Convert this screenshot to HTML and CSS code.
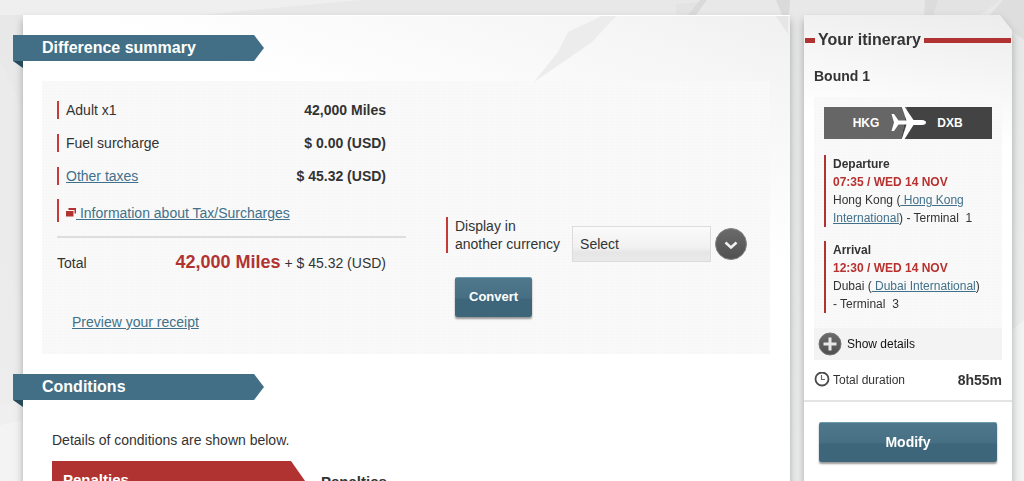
FILE: index.html
```html
<!DOCTYPE html>
<html lang="en">
<head>
<meta charset="utf-8">
<title>Difference summary</title>
<meta name="viewport" content="width=device-width, initial-scale=1">
<link rel="stylesheet" href="styles.css">
</head>
<body>
<svg class="backdrop" viewBox="0 0 1024 481" preserveAspectRatio="none" aria-hidden="true">
  <path d="M0 0H360L200 15H0Z" fill="#efefef"/>
  <path d="M676 4L700 2L690 15H676Z" fill="#e3e3e3"/>
  <path d="M700 0H707L696 15H688Z" fill="#dadada"/>
  <path d="M776 0H790L789 15H782Z" fill="#dadada"/>
  <path d="M925 0H938L934 15H924Z" fill="#dcdcdc"/>
  <path d="M938 0H1000L980 15H934Z" fill="#e3e3e3"/>
  <path d="M1003 0H1024V40L990 15Z" fill="#dedede"/>
  <path d="M0 60L23 110V300L0 250Z" fill="#ebebeb"/>
  <path d="M0 405L23 400V420L0 425Z" fill="#efefef"/>
  <path d="M0 425L23 420V481H0Z" fill="#f3f3f3"/>
  <path d="M1012 330L1024 320V481H1012Z" fill="#f2f2f2"/>
</svg>
<div class="page">
  <main class="card">
    <svg class="shards" viewBox="0 0 340 66" aria-hidden="true">
      <path d="M152 0H166L142 26L116 44L84 66L108 36L118 16Z" fill="#ececec"/>
      <path d="M326 0H338V18Z" fill="#e6e6e6"/>
    </svg>
    <section class="summary">
      <h2 class="ribbon"><span class="ribbon-label">Difference summary</span></h2>
      <div class="panel dotted">
        <div class="charges">
          <dl class="lines">
            <div class="line"><dt>Adult x1</dt><dd>42,000 Miles</dd></div>
            <div class="line"><dt>Fuel surcharge</dt><dd>$ 0.00 (USD)</dd></div>
            <div class="line"><dt><a href="#taxes">Other taxes</a></dt><dd>$ 45.32 (USD)</dd></div>
          </dl>
          <p class="info">
            <svg class="popup-icon" viewBox="0 0 10 9" aria-hidden="true"><path d="M2.500 0H10V5.500H8.500V2H2.500Z" fill="#b13331"/><path d="M0 3H7.500V8.500H0Z" fill="#b13331"/></svg><a href="#info">&nbsp;Information about Tax/Surcharges</a>
          </p>
          <div class="total">
            <span>Total</span>
            <span class="amount"><strong>42,000 Miles</strong> + $ 45.32 (USD)</span>
          </div>
          <a class="receipt" href="#receipt">Preview your receipt</a>
        </div>
        <form class="currency">
          <div class="currency-row">
            <label for="currency">Display in<br>another currency</label>
            <div class="picker">
              <select id="currency"><option>Select</option></select>
              <svg class="picker-icon" viewBox="0 0 32 32" aria-hidden="true">
                <defs><linearGradient id="disc" x2="0" y2="1"><stop offset="0" stop-color="#6b6b6b"/><stop offset="1" stop-color="#505050"/></linearGradient></defs>
                <circle cx="16" cy="16" r="15.500" fill="url(#disc)" stroke="#858585"/>
                <path d="M10.500 14.500L16 19.500L21.500 14.500" fill="none" stroke="#f2f2f2" stroke-width="2.500"/>
              </svg>
            </div>
          </div>
          <button class="button convert" type="button">Convert</button>
        </form>
      </div>
    </section>
    <section class="conditions">
      <h2 class="ribbon"><span class="ribbon-label">Conditions</span></h2>
      <p class="note">Details of conditions are shown below.</p>
      <div class="penalties">
        <h3 class="flag">Penalties</h3>
        <h3 class="column-title">Penalties</h3>
      </div>
    </section>
  </main>
  <aside class="itinerary">
    <h2 class="title">Your itinerary</h2>
    <div class="bound">
      <h3>Bound 1</h3>
      <div class="flight dotted">
        <div class="route">
          <span>HKG</span><span>DXB</span>
          <svg class="plane" viewBox="0 0 36 34" aria-hidden="true"><path d="M10.500 0H13L22.500 14H31Q35 14.500 35 16.500Q35 18.500 31 19H22.500L13 34H10.500L15.500 18.500H7.500L3 25H.500L3 16.500L.500 8H3L7.500 14.500H15.500Z" fill="#fff"/></svg>
        </div>
        <div class="stop">
          <h4>Departure</h4>
          <strong>07:35 / WED 14 NOV</strong>
          <p>Hong Kong (<a href="#hkg"> Hong Kong International</a>) - Terminal&nbsp; 1</p>
        </div>
        <div class="stop">
          <h4>Arrival</h4>
          <strong>12:30 / WED 14 NOV</strong>
          <p>Dubai (<a href="#dxb"> Dubai International</a>) <span class="terminal">- Terminal&nbsp; 3</span></p>
        </div>
      </div>
      <button class="details dotted" type="button">
        <svg viewBox="0 0 24 24" aria-hidden="true"><circle cx="12" cy="12" r="11" fill="url(#disc)" stroke="#777"/><path d="M12 5.500V18.500M5.500 12H18.500" stroke="#e8e8e8" stroke-width="3"/></svg>
        Show details
      </button>
      <div class="duration">
        <svg viewBox="0 0 16 16" aria-hidden="true"><circle cx="8" cy="7" r="6.500" fill="#fff" stroke="#4a4a4a" stroke-width="1.800"/><path d="M7.500 3V7.500H11" fill="none" stroke="#666" stroke-width="1.200"/></svg>
        <span>Total duration</span>
        <b>8h55m</b>
      </div>
    </div>
    <div class="actions">
      <button class="button wide" type="button">Modify</button>
    </div>
  </aside>
</div>
</body>
</html>
```

FILE: styles.css
```css
* { box-sizing: border-box; }

body {
  margin: 0;
  background: linear-gradient(#e8e8e8, #eeeeee);
  color: #333;
  font: 14px/18px "Liberation Sans", Arial, sans-serif;
  overflow-x: hidden;
}

h2, h3, h4, p, dl, dd { margin: 0; }
a { color: #41718a; }
button { font-family: inherit; cursor: pointer; }

.backdrop {
  position: absolute;
  inset: 0;
  width: 100%;
  height: 100%;
  z-index: -1;
}

.page {
  display: grid;
  grid-template-columns: minmax(0, 1fr) 208px;
  gap: 14px;
  min-height: 100vh;
  padding: 15px 12px 0 23px;
}

.card {
  position: relative;
  background: linear-gradient(200deg, #f0f0f0 0, #f6f6f6 80px, #fff 240px);
  border-top: 1px solid #fff;
  box-shadow: 0 5px 8px rgba(60, 65, 65, .4);
}

.shards {
  position: absolute;
  top: 0;
  right: 0;
  width: 340px;
  height: 66px;
}

.dotted {
  background-color: #f9f9f9;
  background-image: radial-gradient(circle, #f4f4f4 1px, transparent 1px);
  background-size: 3px 3px;
}

.summary { padding-top: 19px; }

.ribbon {
  position: relative;
  width: 251px;
  margin-left: -10px;
  font-size: 16px;
  line-height: 26px;
  color: #fff;
}

.ribbon-label {
  display: block;
  padding-left: 29px;
  background: #426f85;
  clip-path: polygon(0 0, 241px 0, 100% 50%, 241px 100%, 0 100%);
}

.ribbon::after {
  content: "";
  position: absolute;
  top: 100%;
  left: 0;
  width: 10px;
  height: 7px;
  background: #28495a;
  clip-path: polygon(0 0, 100% 0, 100% 100%);
}

.panel {
  display: flex;
  align-items: flex-start;
  gap: 40px;
  margin: 20px 20px 0 19px;
  padding: 20px 15px 23px;
}

.charges { flex: 0 1 349px; }

.lines {
  display: grid;
  gap: 15px;
}

.line {
  display: flex;
  justify-content: space-between;
  padding: 0 20px 0 7px;
  border-left: 2px solid #c43b39;
}

.line dd { font-weight: bold; }

.info {
  margin-top: 14px;
  padding: 5px 0 0 7px;
  border-left: 2px solid #c43b39;
}

.popup-icon {
  width: 10px;
  height: 9px;
  vertical-align: 1px;
}

.total {
  display: flex;
  justify-content: space-between;
  align-items: baseline;
  margin-top: 14px;
  padding: 13px 20px 0 0;
  border-top: 2px solid #dedede;
  line-height: 22px;
}

.amount strong {
  color: #b13331;
  font-size: 18px;
}

.receipt {
  display: block;
  width: fit-content;
  margin: 39px 0 0 15px;
}

.currency { margin-top: 116px; }

.currency-row {
  display: flex;
  align-items: flex-start;
}

.currency label {
  padding-left: 7px;
  border-left: 2px solid #c43b39;
}

.picker {
  display: flex;
  align-items: center;
  gap: 4px;
  margin: 9px 0 0 12px;
}

.picker select {
  width: 139px;
  height: 36px;
  padding: 0 7px;
  appearance: none;
  border: 1px solid #dcdcdc;
  border-radius: 0;
  background: linear-gradient(#fafafa, #f1f1f1 60%, #e6e6e6 75%, #e9e9e9);
  color: #333;
  font: inherit;
}

.picker-icon {
  width: 32px;
  height: 32px;
}

.button {
  height: 40px;
  padding: 0 14px 2px;
  border: 0;
  border-top: 1px solid #6c9bb0;
  border-radius: 2px;
  background: linear-gradient(#4f788c, #466f83 50%, #3d667a 55%, #3d667a);
  box-shadow: 0 2px 2px rgba(0, 0, 0, .4);
  color: #fff;
  font-size: 14px;
  font-weight: bold;
}

.convert {
  margin: 15px 0 0 9px;
  font-size: 13px;
}

.conditions { padding-top: 20px; }

.note { padding: 31px 0 0 29px; }

.penalties {
  display: flex;
  gap: 14px;
  margin: 12px 0 0 29px;
}

.penalties h3 { font-size: 15px; }

.flag {
  width: 255px;
  padding: 10px 11px;
  background: #b13331;
  color: #fff;
  clip-path: polygon(0 0, 239px 0, 100% 60%, 239px 100%, 0 100%);
}

.column-title { padding-top: 12px; }

.itinerary {
  position: relative;
  filter: drop-shadow(0 5px 4px rgba(60, 65, 65, .4));
}

.itinerary::before {
  content: "";
  position: absolute;
  inset: 0;
  z-index: -1;
  background: linear-gradient(190deg, #ececec 0, #f3f3f3 50px, #fff 130px);
  clip-path: polygon(0 0, calc(100% - 12px) 0, 100% 15px, 100% 100%, 0 100%);
}

.title {
  display: flex;
  align-items: center;
  gap: 3px;
  padding: 15px 1px 0;
  font-size: 16px;
  line-height: 20px;
}

.title::before,
.title::after {
  content: "";
  width: 10px;
  height: 5px;
  background: #b13331;
}

.title::after { flex: 1; }

.bound {
  padding: 17px 10px 11px;
  border-bottom: 2px solid #e4e4e4;
  font-size: 12px;
}

.bound h3 { font-size: 14px; }
.bound h4 { font-size: 12px; }

.flight {
  margin-top: 12px;
  padding: 10px 10px 15px;
}

.route {
  position: relative;
  display: grid;
  grid-template-columns: 1fr 1fr;
  background: linear-gradient(100deg, #666 48%, #434343 48%);
  color: #fff;
  font-weight: bold;
  line-height: 32px;
  text-align: center;
}

.plane {
  position: absolute;
  top: -1px;
  left: 40%;
  width: 36px;
  height: 34px;
}

.stop {
  margin-top: 14px;
  padding-left: 7px;
  border-left: 2px solid #b13331;
}

.stop strong { color: #b8312f; }
.route + .stop { margin-top: 16px; }
.terminal { white-space: nowrap; }

.details {
  display: flex;
  align-items: center;
  gap: 5px;
  width: 100%;
  padding: 4px;
  border: 0;
  background-color: #f3f3f3;
  color: #111;
  font-size: 12px;
}

.details svg {
  width: 24px;
  height: 24px;
}

.duration {
  display: flex;
  align-items: center;
  gap: 3px;
  padding-top: 11px;
}

.duration svg {
  width: 16px;
  height: 16px;
}

.duration b {
  margin-left: auto;
  font-size: 14px;
}

.actions { padding: 20px 15px; }
.wide { width: 100%; }
```
